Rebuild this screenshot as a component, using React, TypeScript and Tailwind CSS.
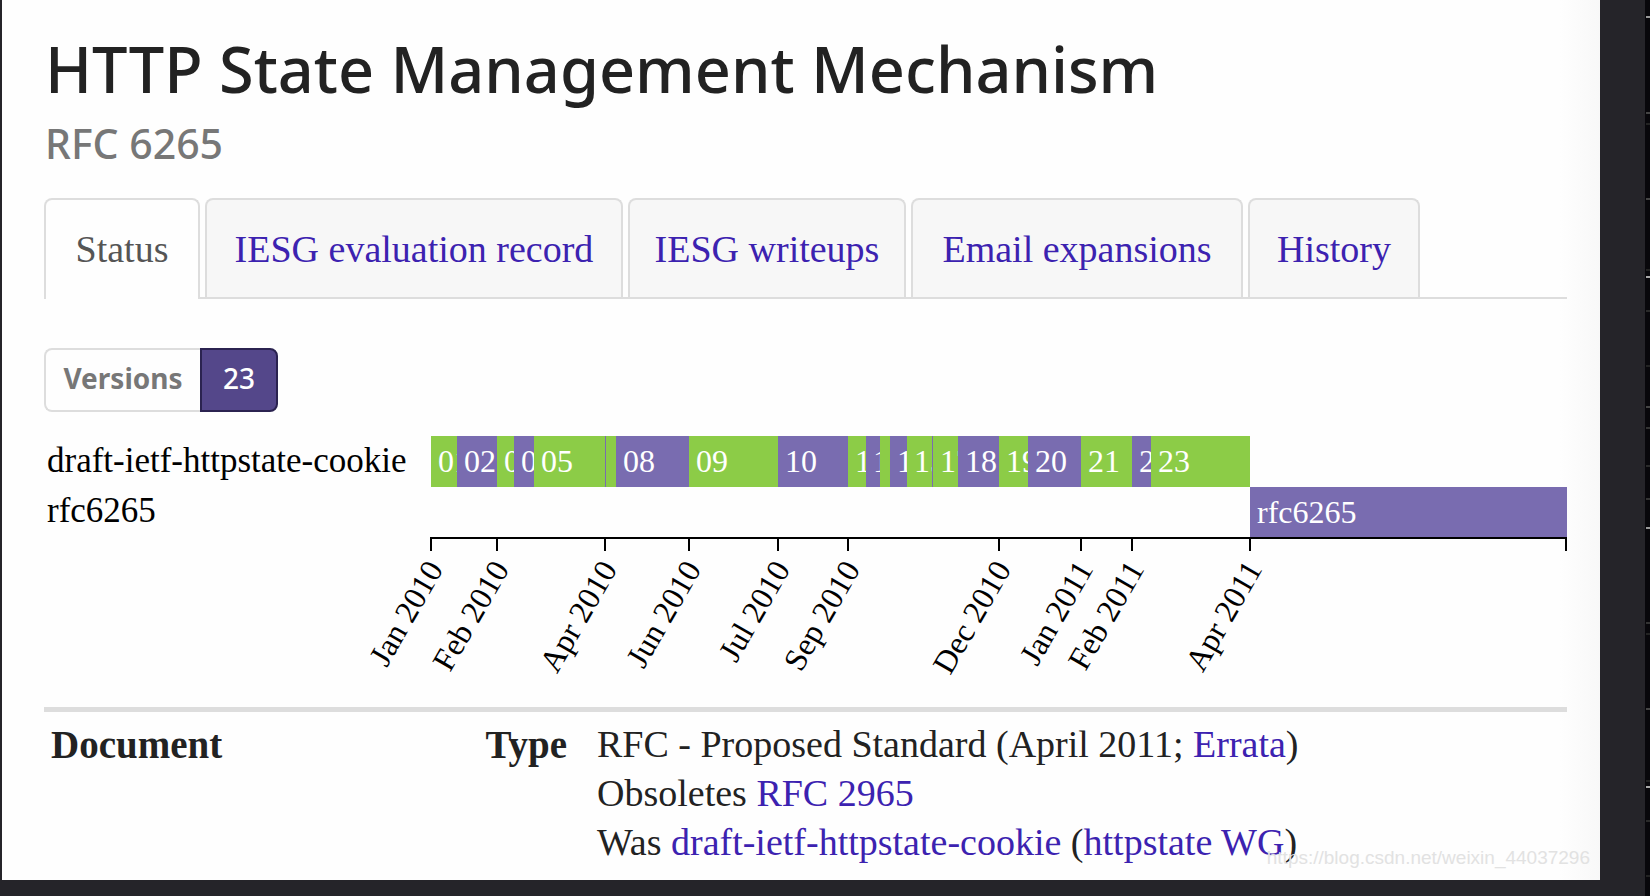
import React from "react";

type Bar = { x: number; end: number; label: string; color: string };

const GREEN = "#8ccc47";
const PURPLE = "#796cb0";

const edges = [387, 413, 453, 470, 490, 561, 562, 572, 645, 734, 804, 822, 836, 846, 863, 888, 889, 914, 955, 984, 1037, 1088, 1107, 1206];
const labels = ["01", "02", "03", "04", "05", "", "", "08", "09", "10", "11", "12", "", "14", "15", "", "17", "18", "19", "20", "21", "22", "23"];

const bars: Bar[] = labels.map((label, i) => ({
  x: edges[i],
  end: edges[i + 1],
  label,
  color: i % 2 === 0 ? GREEN : PURPLE,
}));

const ticks: [number, string][] = [
  [387, "Jan 2010"],
  [453, "Feb 2010"],
  [561, "Apr 2010"],
  [645, "Jun 2010"],
  [734, "Jul 2010"],
  [804, "Sep 2010"],
  [955, "Dec 2010"],
  [1037, "Jan 2011"],
  [1088, "Feb 2011"],
  [1206, "Apr 2011"],
];

const tabs = [
  { name: "IESG evaluation record", width: "w-[418px]" },
  { name: "IESG writeups", width: "w-[278px]" },
  { name: "Email expansions", width: "w-[332px]" },
  { name: "History", width: "w-[172px]" },
];

const specks: [number, string][] = [
  [16, "#999"],
  [112, "#444"],
  [123, "#222"],
  [198, "#444"],
  [269, "#222"],
  [276, "#aaa"],
  [310, "#2a2a2a"],
  [365, "#222"],
  [406, "#444"],
  [427, "#333"],
  [465, "#2a2a2a"],
  [498, "#333"],
  [527, "#999"],
  [622, "#333"],
  [633, "#222"],
  [708, "#444"],
  [780, "#222"],
  [786, "#aaa"],
  [820, "#2a2a2a"],
  [875, "#222"],
];

function Timeline() {
  return (
    <svg viewBox="0 0 1523 256" className="block w-full" role="img" aria-label="Version timeline" fontSize="32">
      <text x="3" y="36" fontSize="35">draft-ietf-httpstate-cookie</text>
      <text x="3" y="86" fontSize="35">rfc6265</text>
      {bars.map((b) => (
        <svg key={b.x} x={b.x} y="0" width={b.end - b.x} height="51" overflow="hidden">
          <rect width="100%" height="51" fill={b.color} />
          <text x="7" y="36" fill="#fff">{b.label}</text>
        </svg>
      ))}
      <rect x="1206" y="51" width="317" height="50" fill={PURPLE} />
      <text x="1213" y="87" fill="#fff">rfc6265</text>
      <path d="M387 115V102H1522V115" fill="none" stroke="#000" strokeWidth="2" />
      {ticks.map(([x, name]) => (
        <g key={x}>
          <path d={`M${x} 101V115`} stroke="#000" strokeWidth="2" />
          <text transform={`translate(${x + 13} 133) rotate(-60)`} textAnchor="end">{name}</text>
        </g>
      ))}
    </svg>
  );
}

export default function App() {
  return (
    <div className="relative min-h-screen overflow-hidden bg-[#252429] pb-4 pl-[2px] pr-[50px] font-['Liberation_Serif',serif] text-[#222]">
      <main className="min-h-[880px] bg-[linear-gradient(to_left,#f8f8f8,#fefefe_40px)] pl-[42px] pr-[33px] pt-[29px]">
        <h1 className="pl-px font-['Noto_Sans',sans-serif] text-[63px] font-medium leading-[80px]">HTTP State Management Mechanism</h1>
        <p className="mt-[10px] pl-px font-['Noto_Sans',sans-serif] text-[41px] font-medium leading-[48px] text-[#777]">RFC 6265</p>

        <nav className="mt-[31px] flex gap-[5px] border-b-2 border-[#ddd] text-[38px] leading-[44px]">
          <a href="#status" aria-current="page" className="-mb-[2px] flex h-[101px] w-[156px] items-center justify-center rounded-t-lg border-2 border-b-0 border-[#ddd] bg-[#fefefe] pb-[2px] text-[#555]">Status</a>
          {tabs.map((t) => (
            <a key={t.name} href="#tab" className={`${t.width} flex h-[99px] items-center justify-center whitespace-nowrap rounded-t-lg border-2 border-b-0 border-[#ddd] bg-[#f7f7f7] text-[#3c22b0]`}>{t.name}</a>
          ))}
        </nav>

        <div className="mt-[49px] flex h-[64px] font-['Noto_Sans',sans-serif] text-[28px] leading-[36px]">
          <button className="w-[156px] rounded-l-lg border-2 border-r-0 border-[#ddd] pb-1 font-bold text-[#777]">Versions</button>
          <button className="w-[78px] rounded-r-lg border-2 border-[#2b2350] bg-[#54478a] pb-1 font-medium text-white">23</button>
        </div>

        <div className="mt-6 text-black">
          <Timeline />
        </div>

        <table className="mt-[15px] w-full table-fixed border-t-[5px] border-[#ddd] text-[38px] leading-[49px]">
          <tbody>
            <tr className="align-top">
              <th className="w-[398px] pl-[7px] pt-2 text-left text-[39px]">Document</th>
              <th className="w-[125px] pt-2 text-right text-[39px]">Type</th>
              <td className="pl-[30px] pt-2">
                <p>RFC - Proposed Standard (April 2011; <a href="#errata" className="text-[#3c22b0]">Errata</a>)</p>
                <p>Obsoletes <a href="#rfc2965" className="text-[#3c22b0]">RFC 2965</a></p>
                <p>Was <a href="#draft" className="text-[#3c22b0]">draft-ietf-httpstate-cookie</a> (<a href="#wg" className="text-[#3c22b0]">httpstate WG</a>)</p>
              </td>
            </tr>
          </tbody>
        </table>
      </main>
      <svg className="absolute right-0 top-0 h-full w-[5px] bg-[#08070b]" aria-hidden="true">
        {specks.map(([y, color]) => (
          <rect key={y} x="1" y={y} width="4" height="2" fill={color} />
        ))}
      </svg>
      <span className="absolute bottom-[27px] right-[60px] font-['Liberation_Sans',sans-serif] text-[19px] leading-[22px] text-[#e2e2e2]">https://blog.csdn.net/weixin_44037296</span>
    </div>
  );
}
